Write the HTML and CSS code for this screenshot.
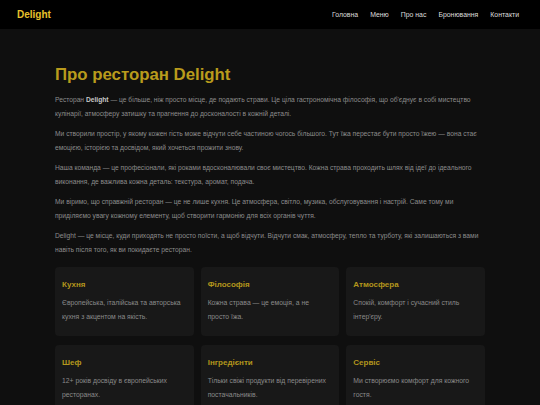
FILE: index.html
```html
<!DOCTYPE html>
<html lang="uk">
<head>
<meta charset="utf-8">
<title>Delight</title>
<link rel="stylesheet" href="styles.css">
</head>
<body>
<header class="header">
  <div class="logo">Delight</div>
  <nav class="nav">
    <a href="#">Головна</a>
    <a href="#">Меню</a>
    <a href="#">Про нас</a>
    <a href="#">Бронювання</a>
    <a href="#">Контакти</a>
  </nav>
</header>
<main class="main">
  <section class="about">
    <h1 class="title">Про ресторан Delight</h1>
    <p>Ресторан <strong>Delight</strong> — це більше, ніж просто місце, де подають страви. Це ціла гастрономічна філософія, що об'єднує в собі мистецтво кулінарії, атмосферу затишку та прагнення до досконалості в кожній деталі.</p>
    <p>Ми створили простір, у якому кожен гість може відчути себе частиною чогось більшого. Тут їжа перестає бути просто їжею — вона стає емоцією, історією та досвідом, який хочеться прожити знову.</p>
    <p>Наша команда — це професіонали, які роками вдосконалювали своє мистецтво. Кожна страва проходить шлях від ідеї до ідеального виконання, де важлива кожна деталь: текстура, аромат, подача.</p>
    <p>Ми віримо, що справжній ресторан — це не лише кухня. Це атмосфера, світло, музика, обслуговування і настрій. Саме тому ми приділяємо увагу кожному елементу, щоб створити гармонію для всіх органів чуття.</p>
    <p>Delight — це місце, куди приходять не просто поїсти, а щоб відчути. Відчути смак, атмосферу, тепло та турботу, які залишаються з вами навіть після того, як ви покидаєте ресторан.</p>
    <div class="cards">
      <div class="card"><h3>Кухня</h3><p>Європейська, італійська та авторська кухня з акцентом на якість.</p></div>
      <div class="card"><h3>Філософія</h3><p>Кожна страва — це емоція, а не просто їжа.</p></div>
      <div class="card"><h3>Атмосфера</h3><p>Спокій, комфорт і сучасний стиль інтер'єру.</p></div>
      <div class="card"><h3>Шеф</h3><p>12+ років досвіду в європейських ресторанах.</p></div>
      <div class="card"><h3>Інгредієнти</h3><p>Тільки свіжі продукти від перевірених постачальників.</p></div>
      <div class="card"><h3>Сервіс</h3><p>Ми створюємо комфорт для кожного гостя.</p></div>
    </div>
  </section>
</main>
</body>
</html>
```

FILE: styles.css
```css
* { box-sizing: border-box; }
html, body { margin: 0; padding: 0; }
body {
  background: #0f0f0f;
  font-family: "Liberation Sans", Arial, sans-serif;
  color: #9a9a9a;
}
.header {
  height: 29px;
  background: #000;
  display: flex;
  align-items: center;
  justify-content: space-between;
  padding: 0 21px 0 17px;
}
.logo {
  color: #e8c22c;
  font-weight: bold;
  font-size: 10px;
}
.nav {
  display: flex;
  gap: 12px;
}
.nav a {
  color: #dedede;
  text-decoration: none;
  font-size: 6.9px;
}
.main {
  padding: 36px 55px 0;
}
.title {
  margin: 0 0 8px;
  color: #b99b1c;
  font-size: 16.8px;
  font-weight: bold;
  line-height: 20px;
}
.about > p {
  margin: 0 0 6.6px;
  font-size: 6.7px;
  line-height: 13.7px;
  color: #8c8c8c;
}
.about > p strong { color: #c8c8c8; }
.cards {
  margin-top: 10.5px;
  display: grid;
  grid-template-columns: repeat(3, 1fr);
  gap: 8.5px 7px;
}
.card {
  background: #181818;
  border-radius: 4px;
  padding: 12px 7px 12.5px;
}
.card h3 {
  margin: 0 0 5px;
  color: #b3961c;
  font-size: 8px;
  line-height: 12px;
}
.card p {
  margin: 0;
  font-size: 6.8px;
  line-height: 14px;
  color: #8a8a8a;
}
```
